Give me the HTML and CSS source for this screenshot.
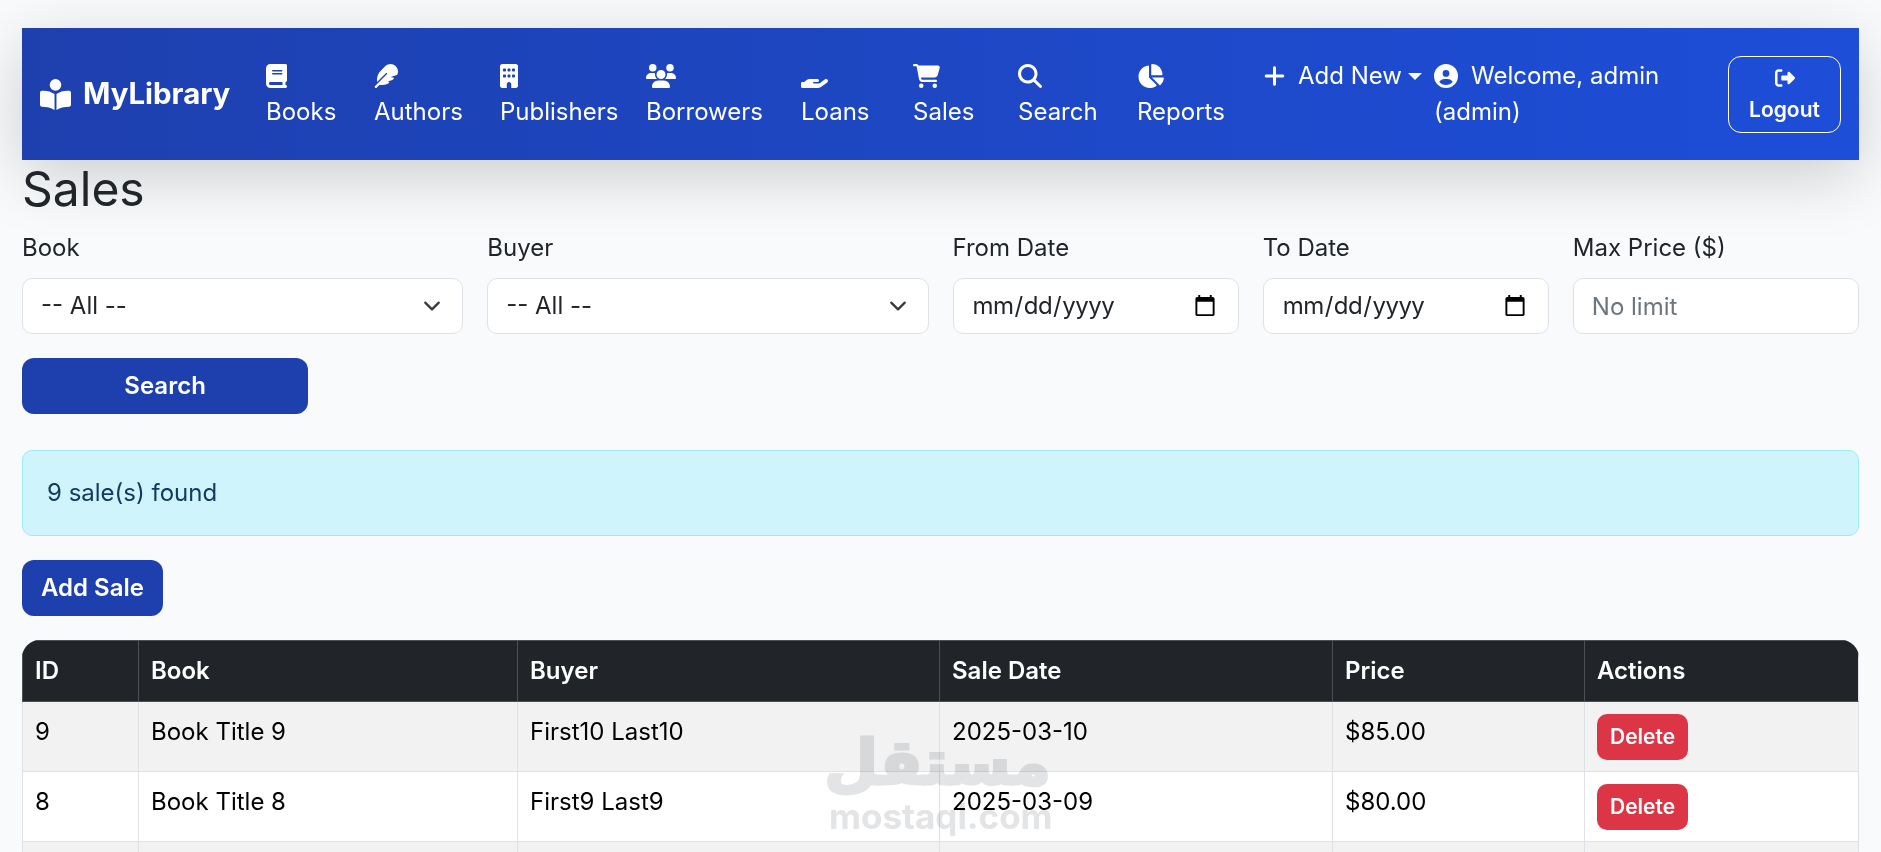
FILE: index.html
```html
<!DOCTYPE html>
<html lang="en">
<head>
<meta charset="utf-8">
<title>Sales - MyLibrary</title>
<link rel="stylesheet" href="styles.css">
</head>
<body>
<svg class="defs" width="0" height="0" aria-hidden="true">
  <symbol id="i-reader" viewBox="0 0 512 512"><path d="M160 96a96 96 0 1 1 192 0A96 96 0 1 1 160 96zm80 152V512l-48.400-24.200c-20.900-10.400-43.500-17-66.800-19.300l-96-9.600C12.500 457.200 0 443.500 0 427V224c0-17.700 14.300-32 32-32H62.300c63.600 0 125.600 19.600 177.700 56zm32 264V248c52.100-36.400 114.100-56 177.700-56H480c17.700 0 32 14.300 32 32V427c0 16.400-12.500 30.200-28.800 31.800l-96 9.600c-23.200 2.300-45.900 8.900-66.800 19.300L272 512z"/></symbol>
  <symbol id="i-book" viewBox="0 0 448 512"><path d="M96 0C43 0 0 43 0 96V416c0 53 43 96 96 96H384h32c17.700 0 32-14.300 32-32s-14.300-32-32-32V384c17.700 0 32-14.300 32-32V32c0-17.700-14.300-32-32-32H384 96zm0 384H352v64H96c-17.700 0-32-14.300-32-32s14.300-32 32-32zm32-240c0-8.800 7.200-16 16-16H336c8.800 0 16 7.200 16 16s-7.200 16-16 16H144c-8.800 0-16-7.200-16-16zm16 48H336c8.800 0 16 7.200 16 16s-7.200 16-16 16H144c-8.800 0-16-7.200-16-16s7.200-16 16-16z"/></symbol>
  <symbol id="i-feather" viewBox="0 0 512 512"><path d="M278.500 215.600L23 471c-9.400 9.400-9.400 24.600 0 33.900s24.600 9.400 33.900 0l57-57h68c49.700 0 97.900-14.400 139-41c11.100-7.200 5.500-23-7.800-23c-5.100 0-9.200-4.100-9.200-9.200c0-4.100 2.700-7.600 6.500-8.800l81-24.300c2.500-.8 4.800-2.100 6.700-4l22.400-22.400c10.100-10.100 2.900-27.300-11.300-27.300l-32.200 0c-5.100 0-9.200-4.100-9.200-9.200c0-4.100 2.700-7.600 6.500-8.800l112-33.600c4-1.200 7.400-3.900 9.300-7.700C506.400 207.600 512 184.100 512 160c0-41-16.300-80.300-45.300-109.300l-5.500-5.500C432.300 16.300 393 0 352 0s-80.300 16.300-109.300 45.300L139 149C91 197 64 262.100 64 330v55.300L253.600 195.800c6.200-6.200 16.400-6.200 22.600 0c5.400 5.400 6.100 13.600 2.200 19.800z"/></symbol>
  <symbol id="i-building" viewBox="0 0 384 512"><path d="M48 0C21.500 0 0 21.500 0 48V464c0 26.500 21.500 48 48 48h96V432c0-26.500 21.500-48 48-48s48 21.500 48 48v80h96c26.500 0 48-21.500 48-48V48c0-26.500-21.500-48-48-48H48zM64 240c0-8.800 7.200-16 16-16h32c8.800 0 16 7.200 16 16v32c0 8.800-7.200 16-16 16H80c-8.800 0-16-7.200-16-16V240zm112-16h32c8.800 0 16 7.200 16 16v32c0 8.800-7.200 16-16 16H176c-8.800 0-16-7.200-16-16V240c0-8.800 7.200-16 16-16zm80 16c0-8.800 7.200-16 16-16h32c8.800 0 16 7.200 16 16v32c0 8.800-7.200 16-16 16H272c-8.800 0-16-7.200-16-16V240zM80 96h32c8.800 0 16 7.200 16 16v32c0 8.800-7.200 16-16 16H80c-8.800 0-16-7.200-16-16V112c0-8.800 7.200-16 16-16zm80 16c0-8.800 7.200-16 16-16h32c8.800 0 16 7.200 16 16v32c0 8.800-7.200 16-16 16H176c-8.800 0-16-7.200-16-16V112zM272 96h32c8.800 0 16 7.200 16 16v32c0 8.800-7.200 16-16 16H272c-8.800 0-16-7.200-16-16V112c0-8.800 7.200-16 16-16z"/></symbol>
  <symbol id="i-users" viewBox="0 0 640 512"><path d="M144 0a80 80 0 1 1 0 160A80 80 0 1 1 144 0zM512 0a80 80 0 1 1 0 160A80 80 0 1 1 512 0zM0 298.700C0 239.800 47.800 192 106.700 192h42.700c15.900 0 31 3.500 44.600 9.700c-1.300 7.200-1.900 14.700-1.900 22.300c0 38.200 16.800 72.500 43.300 96c-.2 0-.4 0-.7 0H21.300C9.600 320 0 310.400 0 298.700zM405.300 320c-.2 0-.4 0-.7 0c26.600-23.500 43.300-57.800 43.300-96c0-7.600-.7-15-1.900-22.300c13.600-6.300 28.700-9.700 44.600-9.700h42.700C592.200 192 640 239.800 640 298.700c0 11.800-9.600 21.300-21.300 21.300H405.300zM224 224a96 96 0 1 1 192 0 96 96 0 1 1 -192 0zM128 485.300C128 411.700 187.700 352 261.300 352H378.700C452.300 352 512 411.700 512 485.300c0 14.700-11.900 26.700-26.700 26.700H154.700c-14.700 0-26.700-11.900-26.700-26.700z"/></symbol>
  <symbol id="i-hand" viewBox="0 0 576 512"><path d="M559.700 392.200c17.800-13.100 21.600-38.100 8.500-55.900s-38.100-21.600-55.900-8.500L392.600 416H272c-8.800 0-16-7.200-16-16s7.200-16 16-16h16 64c17.700 0 32-14.300 32-32s-14.300-32-32-32H288 272 193.700c-29.100 0-57.300 9.900-80 28L68.800 384H32c-17.700 0-32 14.300-32 32v64c0 17.700 14.300 32 32 32H192 352.500c29 0 57.300-9.300 80.700-26.500l126.600-93.300z"/></symbol>
  <symbol id="i-cart" viewBox="0 0 576 512"><path d="M0 24C0 10.700 10.700 0 24 0H69.500c22 0 41.500 12.800 50.600 32h411c26.300 0 45.500 25 38.600 50.400l-41 152.300c-8.500 31.400-37 53.300-69.500 53.300H170.700l5.400 28.500c2.200 11.300 12.100 19.500 23.600 19.500H488c13.300 0 24 10.700 24 24s-10.700 24-24 24H199.700c-34.600 0-64.300-24.600-70.700-58.500L77.400 54.500c-.7-3.800-4-6.500-7.900-6.500H24C10.700 48 0 37.300 0 24zM128 464a48 48 0 1 1 96 0 48 48 0 1 1 -96 0zm336-48a48 48 0 1 1 0 96 48 48 0 1 1 0-96z"/></symbol>
  <symbol id="i-search" viewBox="0 0 512 512"><path d="M416 208c0 45.900-14.900 88.300-40 122.700L502.600 457.400c12.500 12.500 12.500 32.800 0 45.300s-32.800 12.500-45.300 0L330.700 376c-34.400 25.200-76.800 40-122.700 40C93.100 416 0 322.900 0 208S93.100 0 208 0S416 93.100 416 208zM208 352a144 144 0 1 0 0-288 144 144 0 1 0 0 288z"/></symbol>
  <symbol id="i-pie" viewBox="0 0 576 512"><path d="M304 240V16.600c0-9 7-16.600 16-16.600C443.700 0 544 100.300 544 224c0 9-7.600 16-16.600 16H304zM32 272C32 150.700 122.100 50.300 239 34.300c9.200-1.300 17 6.100 17 15.400V288L412.500 444.500c6.700 6.700 6.200 17.700-1.500 23.100C371.800 495.600 323.800 512 272 512C139.500 512 32 404.600 32 272zm526.400 16c9.300 0 16.600 7.800 15.400 17c-7.700 55.900-34.600 105.600-73.900 142.300c-6 5.600-15.400 5.200-21.200-.7L320 288H558.400z"/></symbol>
  <symbol id="i-plus" viewBox="0 0 448 512"><path d="M256 80c0-17.700-14.300-32-32-32s-32 14.300-32 32V224H48c-17.700 0-32 14.300-32 32s14.300 32 32 32H192V432c0 17.700 14.300 32 32 32s32-14.300 32-32V288H400c17.700 0 32-14.300 32-32s-14.300-32-32-32H256V80z"/></symbol>
  <symbol id="i-user" viewBox="0 0 512 512"><path d="M399 384.200C376.900 345.800 335.400 320 288 320H224c-47.400 0-88.900 25.800-111 64.200c35.200 39.200 86.200 63.800 143 63.800s107.800-24.700 143-63.800zM0 256a256 256 0 1 1 512 0A256 256 0 1 1 0 256zm256 16a72 72 0 1 0 0-144 72 72 0 1 0 0 144z"/></symbol>
  <symbol id="i-logout" viewBox="0 0 512 512"><path d="M377.900 105.900L500.700 228.700c7.200 7.200 11.300 17.100 11.300 27.300s-4.100 20.100-11.300 27.300L377.900 406.100c-6.400 6.400-15 9.900-24 9.900c-18.700 0-33.900-15.200-33.900-33.900l0-62.100-128 0c-17.700 0-32-14.300-32-32l0-64c0-17.700 14.300-32 32-32l128 0 0-62.100c0-18.700 15.200-33.900 33.900-33.900c9 0 17.600 3.500 24 9.900zM160 96L96 96c-17.700 0-32 14.300-32 32l0 256c0 17.700 14.300 32 32 32l64 0c17.700 0 32 14.300 32 32s-14.300 32-32 32l-64 0c-53 0-96-43-96-96L0 128C0 75 43 32 96 32l64 0c17.700 0 32 14.300 32 32s-14.300 32-32 32z"/></symbol>
</svg>

<nav class="navbar">
  <a class="brand" href="#"><svg class="brand-icon"><use href="#i-reader"/></svg><span>MyLibrary</span></a>
  <ul class="nav-list">
    <li class="nav-item"><svg class="icon w21"><use href="#i-book"/></svg><span>Books</span></li>
    <li class="nav-item"><svg class="icon w24"><use href="#i-feather"/></svg><span>Authors</span></li>
    <li class="nav-item"><svg class="icon w18"><use href="#i-building"/></svg><span>Publishers</span></li>
    <li class="nav-item"><svg class="icon w30"><use href="#i-users"/></svg><span>Borrowers</span></li>
    <li class="nav-item"><svg class="icon w27"><use href="#i-hand"/></svg><span>Loans</span></li>
    <li class="nav-item"><svg class="icon w27"><use href="#i-cart"/></svg><span>Sales</span></li>
    <li class="nav-item"><svg class="icon w24"><use href="#i-search"/></svg><span>Search</span></li>
    <li class="nav-item"><svg class="icon w27"><use href="#i-pie"/></svg><span>Reports</span></li>
    <li class="nav-add"><svg class="icon w21"><use href="#i-plus"/></svg><span>Add New</span><i class="caret"></i></li>
  </ul>
  <div class="welcome"><svg class="icon w24 user-icon"><use href="#i-user"/></svg>Welcome, admin (admin)</div>
  <a class="logout" href="#"><svg class="logout-icon"><use href="#i-logout"/></svg><span>Logout</span></a>
</nav>

<main>
  <h1 class="title">Sales</h1>
  <form class="filters">
    <div class="field span3"><label>Book</label><select class="control select"><option>-- All --</option></select></div>
    <div class="field span3"><label>Buyer</label><select class="control select"><option>-- All --</option></select></div>
    <div class="field span2"><label>From Date</label><input class="control date" type="date"></div>
    <div class="field span2"><label>To Date</label><input class="control date" type="date"></div>
    <div class="field span2"><label>Max Price ($)</label><input class="control" type="text" placeholder="No limit"></div>
    <button class="btn span2" type="button">Search</button>
  </form>

  <div class="alert">9 sale(s) found</div>

  <a class="btn add" href="#">Add Sale</a>

  <table class="table">
    <thead>
      <tr><th class="c-id">ID</th><th class="c-book">Book</th><th class="c-buyer">Buyer</th><th class="c-date">Sale Date</th><th class="c-price">Price</th><th>Actions</th></tr>
    </thead>
    <tbody>
      <tr><td>9</td><td>Book Title 9</td><td>First10 Last10</td><td>2025-03-10</td><td>$85.00</td><td><a class="del" href="#">Delete</a></td></tr>
      <tr><td>8</td><td>Book Title 8</td><td>First9 Last9</td><td>2025-03-09</td><td>$80.00</td><td><a class="del" href="#">Delete</a></td></tr>
      <tr><td></td><td></td><td></td><td></td><td></td><td></td></tr>
    </tbody>
  </table>
</main>

<div class="watermark">
  <div class="wm-ar" lang="ar" dir="rtl">مستقل</div>
  <div class="wm-en">mostaql.com</div>
</div>
</body>
</html>
```
FILE: styles.css
```css
* { box-sizing: border-box; }
html, body { margin: 0; height: 852px; overflow: hidden; }
body {
  padding: 28px 22px 0;
  background: #f9fafc;
  color: #212529;
  font-family: Inter, "Liberation Sans", sans-serif;
  font-size: 24px;
  line-height: 36px;
  position: relative;
}
.defs { position: absolute; }
a { color: inherit; text-decoration: none; }

.navbar {
  height: 132px;
  padding: 0 18px 0 18px;
  display: flex;
  align-items: center;
  color: #fff;
  background: linear-gradient(90deg, #1e40af, #1d4ed8);
  box-shadow: 0 16px 64px rgba(0, 0, 0, .18);
}
.brand { width: 226px; flex: none; display: flex; align-items: center; gap: 12px; font-size: 29.4px; font-weight: 700; }
.brand-icon { width: 31px; height: 31px; fill: #fff; }
.nav-list {
  list-style: none;
  margin: 0;
  padding: 0;
  display: grid;
  grid-template-columns: 108px 126px 146px 155px 112px 105px 119px 127px 170px;
}
.nav-item { display: flex; flex-direction: column; align-items: flex-start; }
.nav-add { display: flex; align-items: flex-start; }
.icon { height: 24px; margin: 6px 0; fill: #fff; display: block; flex: none; }
.w18 { width: 18px; } .w21 { width: 21px; } .w24 { width: 24px; } .w27 { width: 27px; } .w30 { width: 30px; }
.nav-add .icon { margin-right: 13px; }
.caret { width: 0; height: 0; margin: 15px 0 0 6px; border: 7px solid transparent; border-top-color: #fff; border-bottom: 0; }
.welcome { width: 260px; height: 72px; }
.user-icon { float: left; margin: 6px 13px 0 0; }
.logout {
  width: 113px;
  height: 77px;
  margin-left: auto;
  padding-top: 4px;
  display: flex;
  flex-direction: column;
  align-items: center;
  justify-content: center;
  border: 1px solid #fff;
  border-radius: 13px;
  font-size: 21px;
  line-height: 30px;
  font-weight: 600;
}
.logout-icon { width: 20px; height: 20px; fill: #fff; margin-bottom: 7px; }

.title { margin: 0 0 12px; font-size: 48px; line-height: 58px; font-weight: 400; }
.filters { display: grid; grid-template-columns: repeat(12, 1fr); column-gap: 24px; row-gap: 24px; }
.span3 { grid-column: span 3; }
.span2 { grid-column: span 2; }
label { display: block; margin-bottom: 12px; }
.control {
  display: block;
  width: 100%;
  height: 56px;
  padding: 9px 18px;
  border: 1px solid #dee2e6;
  border-radius: 10px;
  background-color: #fff;
  color: #212529;
  font: inherit;
}
.control::placeholder { color: #6c757d; }
.date { padding-right: 19px; }
.date::-webkit-datetime-edit { letter-spacing: -.5px; }
.select {
  appearance: none;
  padding-right: 40px;
  background-image: url("data:image/svg+xml,%3csvg xmlns='http://www.w3.org/2000/svg' viewBox='0 0 16 16'%3e%3cpath fill='none' stroke='%23343a40' stroke-linecap='round' stroke-linejoin='round' stroke-width='2' d='m2 5 6 6 6-6'/%3e%3c/svg%3e");
  background-repeat: no-repeat;
  background-position: right 18px center;
  background-size: 24px 18px;
}
.btn {
  display: inline-block;
  height: 56px;
  padding: 0 19px;
  border: 0;
  border-radius: 12px;
  background: #1e40af;
  color: #fff;
  font: inherit;
  font-weight: 600;
  line-height: 56px;
  text-align: center;
}
.alert {
  height: 86px;
  margin: 36px 0 24px;
  padding: 24px;
  background: #cff4fc;
  border: 1px solid #9eeaf9;
  border-radius: 10px;
  color: #123a63;
}
.table {
  width: 100%;
  margin-top: 24px;
  table-layout: fixed;
  border-collapse: separate;
  border-spacing: 0;
  border-radius: 18px 18px 0 0;
  overflow: hidden;
}
.c-id { width: 116px; }
.c-book { width: 379px; }
.c-buyer { width: 422px; }
.c-date { width: 393px; }
.c-price { width: 252px; }
th, td { text-align: left; vertical-align: top; padding: 12px; }
th { background: #212529; color: #fff; font-weight: 600; height: 62px; border-left: 1px solid #4d5154; border-top: 1px solid #4d5154; border-bottom: 1px solid #4d5154; }
td { background: #fff; color: #000; border-left: 1px solid #dee2e6; border-bottom: 1px solid #dee2e6; height: 70px; }
td:last-child { padding-bottom: 0; }
tbody tr:nth-child(odd) td { background: #f2f2f2; }
th:last-child, td:last-child { border-right: 1px solid #dee2e6; }
.del {
  display: inline-block;
  vertical-align: top;
  height: 46px;
  padding: 0 13px;
  border-radius: 10px;
  background: #dc3545;
  color: #fff;
  font-size: 21px;
  font-weight: 600;
  line-height: 46px;
}

.watermark {
  position: absolute;
  left: 829px;
  top: 727px;
  width: 222px;
  text-align: center;
  color: #e3e4e6;
  mix-blend-mode: multiply;
  pointer-events: none;
  font-weight: 700;
}
.wm-ar { font-family: "DejaVu Sans", sans-serif; font-size: 62px; line-height: 72px; -webkit-text-stroke: 3px #e3e4e6; }
.wm-en { font-size: 35px; line-height: 35px; }
```
